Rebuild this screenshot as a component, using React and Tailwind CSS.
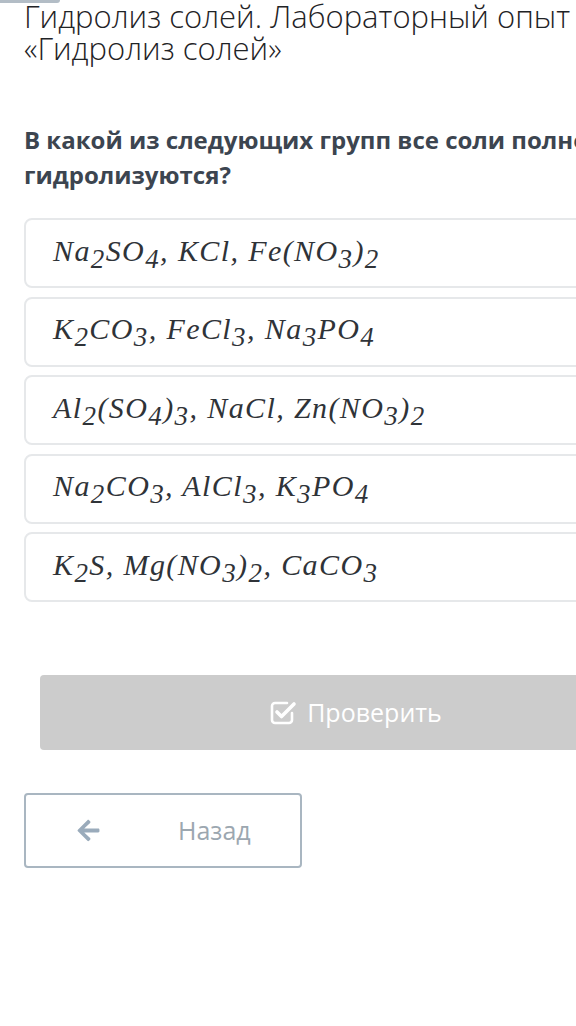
import React from 'react';
import { FaArrowLeft } from 'react-icons/fa';

// формулы ответов: [текст, индекс] пары; индекс опускается вниз
const options = [
  [['Na', '2'], ['SO', '4'], [', KCl, Fe(NO', '3'], [')', '2']],
  [['K', '2'], ['CO', '3'], [', FeCl', '3'], [', Na', '3'], ['PO', '4']],
  [['Al', '2'], ['(SO', '4'], [')', '3'], [', NaCl, Zn(NO', '3'], [')', '2']],
  [['Na', '2'], ['CO', '3'], [', AlCl', '3'], [', K', '3'], ['PO', '4']],
  [['K', '2'], ['S, Mg(NO', '3'], [')', '2'], [', CaCO', '3']],
];

function Formula({ parts }) {
  return (
    <span className="italic text-[30px] tracking-[1.4px] text-[#2f3338] font-['Liberation_Serif',serif] whitespace-nowrap">
      {parts.map(([t, sub], i) => (
        <React.Fragment key={i}>
          {t}
          <span className="relative top-[7px] text-[27px]">{sub}</span>
        </React.Fragment>
      ))}
    </span>
  );
}

function CheckSquare() {
  return (
    <svg width="27" height="25" viewBox="0 0 27 25" fill="none">
      <path d="M17 3H5a3 3 0 0 0-3 3v14a3 3 0 0 0 3 3h14a3 3 0 0 0 3-3v-7" stroke="white" strokeWidth="2.6" strokeLinecap="round" />
      <path d="M7 12l4.5 4.5L24 4" stroke="white" strokeWidth="3.6" strokeLinecap="round" strokeLinejoin="round" />
    </svg>
  );
}

export default function App() {
  return (
    <div className="w-[576px] h-[1026px] overflow-hidden bg-white font-['Open_Sans',sans-serif] relative">
      {/* полоска сверху */}
      <div className="absolute left-0 top-0 w-[60px] h-[3px] bg-[#b3bdc6] rounded-br" />

      <div className="w-[760px] pl-[24px]">
        <h1 className="text-[31px] font-light leading-[32px] text-[#1f2326] whitespace-nowrap">
          Гидролиз солей. Лабораторный опыт
          <br />
          «Гидролиз солей»
        </h1>

        <p className="mt-[58px] text-[24px] font-bold leading-[35px] text-[#3c4550] whitespace-nowrap">
          В какой из следующих групп все соли полностью
          <br />
          гидролизуются?
        </p>

        <div className="mt-[26px] flex flex-col gap-[8.5px]">
          {options.map((parts, i) => (
            <div
              key={i}
              className="h-[70px] border-2 border-[#e6e8ea] rounded-lg flex items-center pl-[27px] pb-[6px]"
            >
              <Formula parts={parts} />
            </div>
          ))}
        </div>

        <div className="mt-[73px] ml-[16px] w-[632px] h-[75px] bg-[#cccccc] rounded flex items-center justify-center gap-[10px] text-white text-[25px]">
          <CheckSquare />
          <span>Проверить</span>
        </div>

        <div className="mt-[43px] w-[278px] h-[75px] border-2 border-[#a9b6c1] rounded flex items-center text-[25px] text-[#9ca7b0]">
          <FaArrowLeft className="ml-[50px] w-[25px] h-[25px] text-[#9aabbb]" />
          <span className="ml-[77px]">Назад</span>
        </div>
      </div>
    </div>
  );
}
